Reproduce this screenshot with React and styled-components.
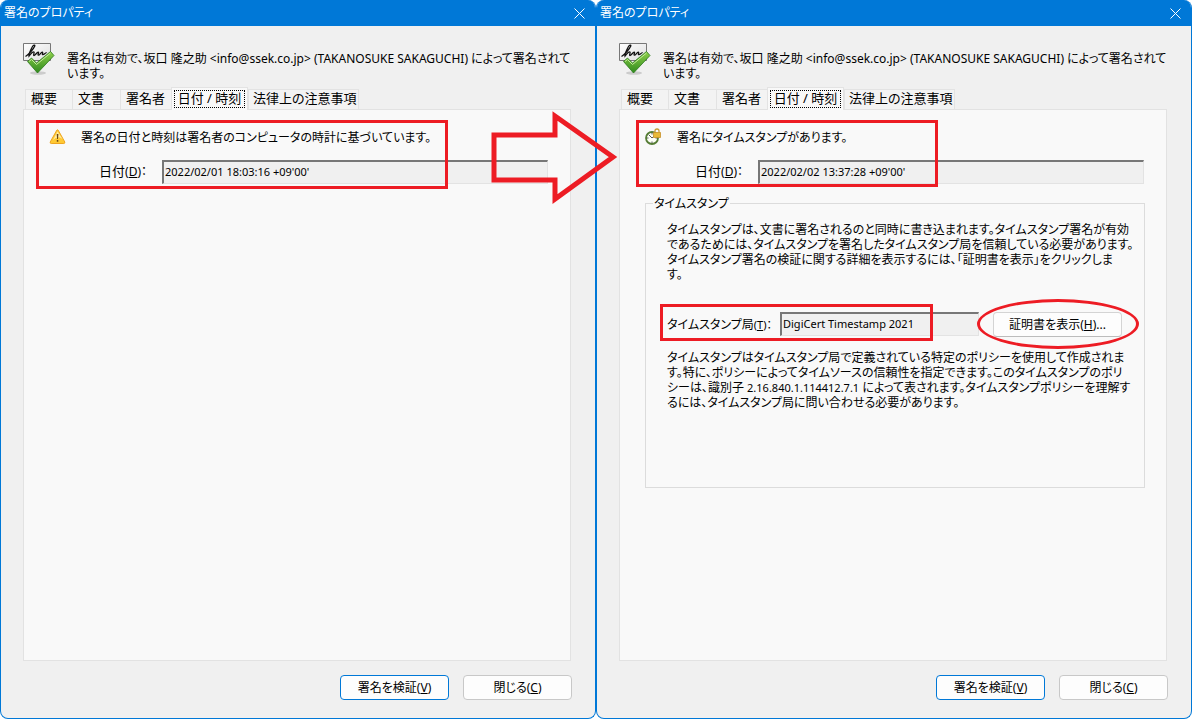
import React from 'react';
import styled, { createGlobalStyle, css } from 'styled-components';

const RED = '#ed1c24';
const BLUE = '#0078d7';

const GlobalStyle = createGlobalStyle`
  * { box-sizing: border-box; }
  body {
    margin: 0;
    background: #fff;
    color: #000;
    font-family: "Noto Sans", "Noto Sans CJK JP", sans-serif;
    font-size: 12px;
    line-height: 15px;
    font-feature-settings: "palt";
  }
  button, input { font: inherit; color: inherit; font-feature-settings: inherit; }
`;

const Stage = styled.main`
  position: relative;
  display: flex;
  min-height: 100vh;
`;

const Dialog = styled.section`
  flex: 1 1 0;
  min-width: 0;
  display: flex;
  flex-direction: column;
  border: 1px solid ${BLUE};
  border-top: 0;
  border-radius: 8px;
  background: #f0f0f0;
  overflow: hidden;
`;

const TitleBar = styled.header`
  display: flex;
  align-items: center;
  justify-content: space-between;
  height: 26px;
  padding: 0 10px 0 3px;
  background: ${BLUE};
  color: #fff;
`;

const Title = styled.h1`
  margin: 0;
  font-size: 12px;
  line-height: 20px;
  font-weight: 400;
`;

const CloseButton = styled.button`
  display: flex;
  padding: 0;
  border: 0;
  background: none;
`;

const Summary = styled.div`
  display: flex;
  gap: 12px;
  padding: 16px 12px 0 21px;
  height: 62px;
`;

const SummaryText = styled.p`
  margin: 0;
  padding-top: 9px;
  white-space: nowrap;
`;

const TabList = styled.div`
  display: flex;
  align-items: flex-end;
  height: 21px;
  padding-left: 24px;
`;

const Tab = styled.button`
  width: ${(p) => p.$width}px;
  height: 20px;
  padding: 0 0 2px 5px;
  border: 1px solid #e3e3e3;
  border-width: 1px 0 0 1px;
  background: #f3f3f3;
  font-size: 13px;
  line-height: 17px;
  text-align: left;
  white-space: nowrap;
  &:last-child {
    padding-left: 4px;
    border-right-width: 1px;
  }
  ${(p) => p.$active && css`
    height: 23px;
    margin-bottom: -1px;
    padding: 1px 2px 2px;
    border-right-width: 1px;
    background: #f9f9f9;
    position: relative;
    z-index: 1;
  `}
`;

const TabFocus = styled.span`
  display: block;
  height: 18px;
  border: 1px dotted #000;
  line-height: 14px;
  text-align: center;
`;

const Panel = styled.div`
  flex: 1;
  margin: 0 24px 0 22px;
  padding: 10px 21px 0 25px;
  border: 1px solid #e2e2e2;
  background: #f9f9f9;
`;

const Section = styled.div`
  position: relative;
`;

const Status = styled.div`
  display: flex;
  align-items: center;
  gap: 15px;
  height: 34px;
  white-space: nowrap;
`;

const FieldRow = styled.div`
  display: flex;
  height: 24px;
  margin-top: 6px;
  padding: 0 1px 0 50px;
`;

const DateLabel = styled.label`
  width: 63px;
  flex: none;
  padding-top: 4px;
  font-size: 13px;
  white-space: nowrap;
`;

const AuthorityLabel = styled.label`
  width: 113px;
  flex: none;
  padding-top: 5px;
  white-space: nowrap;
`;

const Latin = styled.span`
  font-size: ${(p) => p.$size}px;
`;

const Field = styled.input`
  flex: 1;
  min-width: 0;
  height: 24px;
  padding: 0 1px 2px;
  border: 1px solid;
  border-width: 2px 1px 1px 2px;
  border-color: #777 #e3e3e3 #e3e3e3 #777;
  background: #f0f0f0;
  font-size: 11px;
  outline: 0;
`;

const Group = styled.fieldset`
  min-width: 0;
  height: 292px;
  margin: 12px 0 0;
  padding: 11px 22px 0 21px;
  border: 1px solid #dcdcdc;
`;

const GroupTitle = styled.legend`
  margin-left: -14px;
  padding: 0 1px;
`;

const Paragraph = styled.p`
  margin: 0;
  white-space: nowrap;
`;

const AuthorityRow = styled.div`
  position: relative;
  display: flex;
  height: 25px;
  margin: 30px 0 13px;
`;

const PushButton = styled.button`
  width: ${(p) => p.$width}px;
  height: 25px;
  flex: none;
  padding: 0;
  border: 1px solid ${(p) => (p.$primary ? BLUE : '#c8c8c8')};
  border-radius: 4px;
  background: #fdfdfd;
  white-space: nowrap;
  ${AuthorityRow} & {
    margin-left: 14px;
    border-color: #d4d4d4 #d4d4d4 #bcbcbc;
  }
`;

const Footer = styled.footer`
  display: flex;
  justify-content: flex-end;
  gap: 14px;
  padding: 14px 23px 18px;
`;

const Highlight = styled.div`
  position: absolute;
  left: ${(p) => p.$left}px;
  top: ${(p) => p.$top}px;
  width: ${(p) => p.$width}px;
  height: ${(p) => p.$height}px;
  border: 3px solid ${RED};
  border-radius: ${(p) => (p.$round ? '50%' : 0)};
  pointer-events: none;
`;

const ArrowMark = styled.svg`
  position: absolute;
  left: calc(50% - 106px);
  top: 110px;
  pointer-events: none;
`;

const CloseIcon = () => (
  <svg width="11" height="11" viewBox="0 0 11 11" stroke="#fff" strokeWidth="1">
    <path d="M.5.5l10 10M10.5.5l-10 10" />
  </svg>
);

const SignatureIcon = () => (
  <svg width="33" height="34" viewBox="0 0 33 34" fill="none">
    <defs>
      <linearGradient id="check" x1="0" y1="0" x2="0" y2="1">
        <stop offset="0" stopColor="#8fd04a" />
        <stop offset="1" stopColor="#2f8a1d" />
      </linearGradient>
      <linearGradient id="paper" x1="0" y1="0" x2="1" y2="1">
        <stop offset="0" stopColor="#fff" />
        <stop offset="1" stopColor="#dedede" />
      </linearGradient>
    </defs>
    <path d="M1.500 1.500h27v17h-27z" fill="url(#paper)" stroke="#777" />
    <path d="M3.500 14.500C7 12.500 12 6 12.800 4c.3-1.300-1.300-1.200-2.300.5C8.500 8 6.800 12 7 14c2-2.500 4-4.500 5-4 .8.5-1 2.800-.2 3.500 1.200.4 3-3.500 4.500-3.300 1 .3-1 2.700 0 3 1.400.3 2.400-3 4-3 1 0-.6 2.300.4 2.500 1.300.2 2.300-1.700 4-2.200" stroke="#111" strokeWidth="1.300" />
    <ellipse cx="16" cy="31" rx="8" ry="1.800" fill="#000" opacity=".15" />
    <path d="M5.500 19.500l4-3.500 5 5L28.500 9.500l3.500 4L15.500 31z" fill="url(#check)" stroke="#2b781c" strokeWidth=".8" />
    <path d="M7 19.500l2.500-2 5 5L28.500 11" stroke="#c4eb9c" strokeWidth="1" />
  </svg>
);

const WarningIcon = () => (
  <svg width="17" height="16" viewBox="0 0 17 16">
    <path d="M7.800 1.200q.7-.9 1.400 0L15.800 13q.3 1.500-1 1.500H2.200q-1.300 0-1-1.500z" fill="#ffc933" stroke="#eea521" />
    <path d="M8.500 2.500L4 11q5-5 9.500-1z" fill="#ffeaa0" />
    <path d="M7.700 5h1.700l-.4 5h-.9zM7.800 11h1.500v1.700H7.800z" fill="#6b4712" />
  </svg>
);

const ClockIcon = () => (
  <svg width="17" height="18" viewBox="0 0 17 18" fill="none">
    <circle cx="7" cy="10" r="6" fill="#fcfff7" stroke="#557c35" strokeWidth="1.800" />
    <path d="M7 5v1.500M7 13.500V15M2 10h1.500M10.500 10H12M3.700 6.700l3.300 3.300 2.500-2.300" stroke="#555" strokeWidth="1" />
    <path d="M10 4.500V3q0-2 2-2t2 2v1.500" stroke="#c49b35" strokeWidth="1.300" />
    <path d="M8.500 4.500h7v5h-7z" fill="#e8b936" stroke="#c8912a" strokeWidth=".8" />
  </svg>
);

const TABS = [
  ['概要', 47],
  ['文書', 48],
  ['署名者', 51],
  ['日付 / 時刻', 77],
  ['法律上の注意事項', 111],
];

function PropertiesDialog({ id, icon, status, date, mark, children }) {
  return (
    <Dialog>
      <TitleBar>
        <Title>署名のプロパティ</Title>
        <CloseButton aria-label="閉じる"><CloseIcon /></CloseButton>
      </TitleBar>
      <Summary>
        <SignatureIcon />
        <SummaryText>
          署名は有効で、坂口 隆之助 &lt;info@ssek.co.jp&gt; (TAKANOSUKE SAKAGUCHI) によって署名されて<br />
          います。
        </SummaryText>
      </Summary>
      <TabList role="tablist">
        {TABS.map(([name, width], i) => (
          <Tab key={name} role="tab" aria-selected={i === 3} $width={width} $active={i === 3}>
            {i === 3 ? <TabFocus>{name}</TabFocus> : name}
          </Tab>
        ))}
      </TabList>
      <Panel>
        <Section>
          <Status>{icon}<span>{status}</span></Status>
          <FieldRow>
            <DateLabel htmlFor={id}>日付<Latin $size={12}>(<u>D</u>)：</Latin></DateLabel>
            <Field id={id} readOnly value={date} />
          </FieldRow>
          {mark}
        </Section>
        {children}
      </Panel>
      <Footer>
        <PushButton $primary $width={109}>署名を検証(<u>V</u>)</PushButton>
        <PushButton $width={109}>閉じる(<u>C</u>)</PushButton>
      </Footer>
    </Dialog>
  );
}

export default function App() {
  return (
    <Stage>
      <GlobalStyle />
      <PropertiesDialog
        id="date-clock"
        icon={<WarningIcon />}
        status="署名の日付と時刻は署名者のコンピュータの時計に基づいています。"
        date="2022/02/01 18:03:16 +09'00'"
        mark={<Highlight $left={-13} $top={0} $width={412} $height={69} />}
      />
      <PropertiesDialog
        id="date-stamp"
        icon={<ClockIcon />}
        status="署名にタイムスタンプがあります。"
        date="2022/02/02 13:37:28 +09'00'"
        mark={<Highlight $left={-9} $top={0} $width={302} $height={67} />}
      >
        <Group>
          <GroupTitle>タイムスタンプ</GroupTitle>
          <Paragraph>
            タイムスタンプは、文書に署名されるのと同時に書き込まれます。タイムスタンプ署名が有効<br />
            であるためには、タイムスタンプを署名したタイムスタンプ局を信頼している必要があります。<br />
            タイムスタンプ署名の検証に関する詳細を表示するには、「証明書を表示」をクリックしま<br />
            す。
          </Paragraph>
          <AuthorityRow>
            <AuthorityLabel htmlFor="authority">タイムスタンプ局<Latin $size={11}>(<u>T</u>)：</Latin></AuthorityLabel>
            <Field id="authority" readOnly value="DigiCert Timestamp 2021" />
            <PushButton $width={129}>証明書を表示(<u>H</u>)...</PushButton>
            <Highlight $left={-7} $top={-8} $width={273} $height={37} />
            <Highlight $round $left={310} $top={-13} $width={162} $height={50} />
          </AuthorityRow>
          <Paragraph>
            タイムスタンプはタイムスタンプ局で定義されている特定のポリシーを使用して作成されま<br />
            す。特に、ポリシーによってタイムソースの信頼性を指定できます。このタイムスタンプのポリ<br />
            シーは、識別子 <Latin $size={11}>2.16.840.1.114412.7.1</Latin> によって表されます。タイムスタンプポリシーを理解す<br />
            るには、タイムスタンプ局に問い合わせる必要があります。
          </Paragraph>
        </Group>
      </PropertiesDialog>
      <ArrowMark width="130" height="96" viewBox="0 0 130 96" fill="none" stroke={RED} strokeWidth="5">
        <path d="M4 25h61V6l58 41-58 42V70H4z" />
      </ArrowMark>
    </Stage>
  );
}
